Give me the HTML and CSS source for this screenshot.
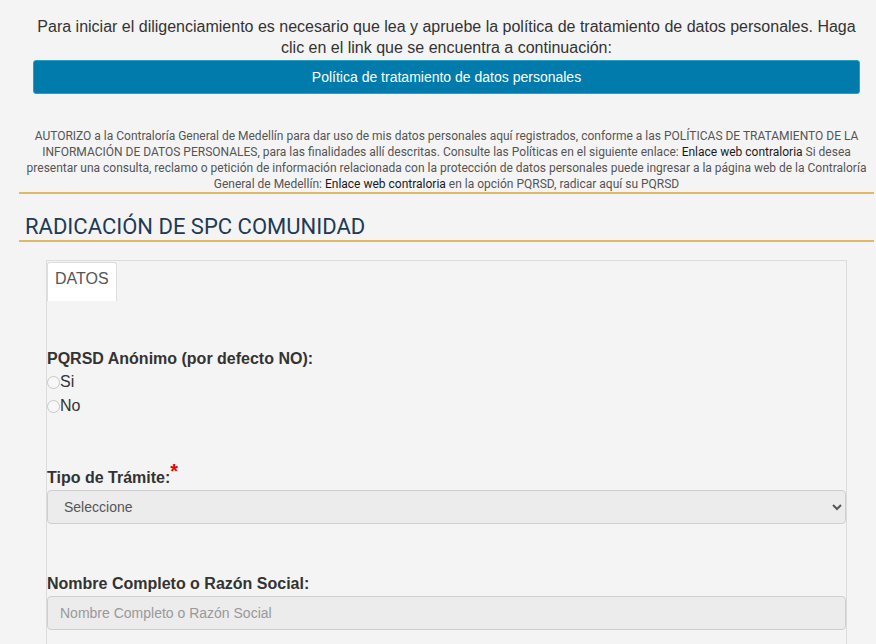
FILE: index.html
```html
<!DOCTYPE html>
<html lang="es">
<head>
<meta charset="utf-8">
<title>Radicación de SPC Comunidad</title>
<link rel="stylesheet" href="styles.css">
</head>
<body>
  <section class="intro">
    <p class="intro-text">Para iniciar el diligenciamiento es necesario que lea y apruebe la política de tratamiento de datos personales. Haga clic en el link que se encuentra a continuación:</p>
    <a class="policy-btn" href="#">Política de tratamiento de datos personales</a>
  </section>

  <p class="authorize">AUTORIZO a la Contraloría General de Medellín para dar uso de mis datos personales aquí registrados, conforme a las POLÍTICAS DE TRATAMIENTO DE LA INFORMACIÓN DE DATOS PERSONALES, para las finalidades allí descritas. Consulte las Políticas en el siguiente enlace: <a href="#">Enlace web contraloria</a> Si desea presentar una consulta, reclamo o petición de información relacionada con la protección de datos personales puede ingresar a la página web de la Contraloría General de Medellín: <a href="#">Enlace web contraloria</a> en la opción PQRSD, radicar aquí su PQRSD</p>

  <h1 class="title">RADICACIÓN DE SPC COMUNIDAD</h1>

  <div class="panel">
    <div class="tabs">
      <span class="tab">DATOS</span>
    </div>
    <form class="form">
      <div class="group">
        <div class="label">PQRSD Anónimo (por defecto NO):</div>
        <label class="radio"><input type="radio" name="anon"><span>Si</span></label>
        <label class="radio"><input type="radio" name="anon"><span>No</span></label>
      </div>
      <div class="group group-gap">
        <div class="label">Tipo de Trámite:<span class="req">*</span></div>
        <select class="control">
          <option>Seleccione</option>
        </select>
      </div>
      <div class="group group-gap2">
        <div class="label">Nombre Completo o Razón Social:</div>
        <input class="control input" type="text" placeholder="Nombre Completo o Razón Social">
      </div>
    </form>
  </div>
</body>
</html>
```
FILE: styles.css
```css
* { box-sizing: border-box; }
html, body { margin: 0; padding: 0; }
body {
  background: #f4f4f4;
  font-family: "Liberation Sans", Arial, sans-serif;
  color: #333;
  height: 644px;
  overflow: hidden;
}
.intro {
  padding: 16px 16px 0 33px;
}
.intro-text {
  margin: 0;
  font-size: 16px;
  line-height: 21px;
  text-align: center;
  color: #333;
}
.policy-btn {
  display: block;
  margin-top: 2px;
  height: 34px;
  line-height: 32px;
  background: #007bab;
  border: 1px solid #2a9fc4;
  border-radius: 3px;
  color: #fff;
  text-align: center;
  font-size: 14px;
  text-decoration: none;
}
.authorize {
  margin: 34px 2px 0 19px;
  padding: 0;
  font-family: Roboto, "Liberation Sans", sans-serif;
  font-size: 12px;
  line-height: 16px;
  text-align: center;
  color: #555;
  border-bottom: 2px solid #e0b86a;
}
.authorize a { color: #1a1a1a; text-decoration: none; }
.title {
  margin: 0 2px 0 19px;
  padding: 20px 6px 0;
  font-family: Roboto, "Liberation Sans", sans-serif;
  font-weight: 400;
  font-size: 22px;
  line-height: 26px;
  color: #1e3a56;
  border-bottom: 2px solid #e0b86a;
}
.panel {
  margin: 18px 0 0 46px;
  width: 801px;
  height: 420px;
  border: 1px solid #dcdcdc;
  border-bottom: none;
  padding-top: 1px;
}
.tabs { display: flex; }
.tab {
  display: block;
  height: 39px;
  padding: 7px 7px 0;
  background: #fff;
  border: 1px solid #ddd;
  border-bottom: none;
  border-radius: 3px 3px 0 0;
  font-size: 16px;
  line-height: 18px;
  color: #555;
}
.form { padding-top: 48px; }
.group { display: flex; flex-direction: column; align-items: flex-start; }
.group-gap { margin-top: 50px; }
.group-gap2 { margin-top: 50px; }
.label {
  font-weight: 700;
  font-size: 16px;
  line-height: 20px;
  color: #333;
}
.req {
  color: #e00;
  font-size: 20px;
  position: relative;
  top: -5px;
  line-height: 0;
}
.radio {
  display: flex;
  align-items: center;
  height: 24px;
  font-size: 16px;
  color: #333;
}
.radio:first-of-type { margin-top: 1px; }
.radio input {
  appearance: none;
  -webkit-appearance: none;
  margin: 0;
  width: 13px;
  height: 13px;
  border: 1px solid #c8c8c8;
  border-radius: 50%;
  background: #f7f7f7;
}
.control {
  margin-top: 2px;
  width: 799px;
  height: 34px;
  background-color: #ececec;
  border: 1px solid #cfcfcf;
  border-radius: 4px;
  font-family: "Liberation Sans", Arial, sans-serif;
  font-size: 14px;
  color: #555;
  padding: 0 12px;
}
.input::placeholder { color: #999; }
```
